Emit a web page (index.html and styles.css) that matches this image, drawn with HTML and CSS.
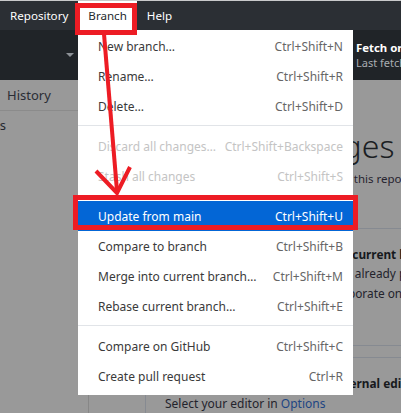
FILE: index.html
```html
<!DOCTYPE html>
<html lang="en">
<head>
<meta charset="utf-8">
<title>GitHub Desktop - Branch menu</title>
<link rel="stylesheet" href="styles.css">
</head>
<body>
<div class="app">
  <header class="titlebar">
    <div class="menu-item">Repository</div>
    <div class="menu-item active">Branch</div>
    <div class="menu-item">Help</div>
  </header>
  <div class="toolbar">
    <div class="tb-branch"><span class="caret"></span></div>
    <div class="tb-push"></div>
    <div class="tb-fetch">
      <div class="fetch-title">Fetch origin</div>
      <div class="fetch-sub">Last fetched just now</div>
    </div>
  </div>
  <div class="body">
    <aside class="sidebar">
      <div class="tabs"><span class="tab">History</span></div>
      <div class="file-count"><span>0 changed files</span></div>
    </aside>
    <main class="content">
      <h1 class="nc-title">No local changes</h1>
      <p class="nc-intro">There are no uncommitted changes in this repository. Here are some friendly suggestions for what to do next.</p>
      <div class="card card-pr">
        <h2 class="card-title">Create a pull request from your current branch</h2>
        <p class="card-text">The current branch (<code class="ref">develop</code>) is already published to GitHub. Create a<br>pull request to propose and collaborate on your changes.</p>
      </div>
      <div class="card card-editor">
        <h2 class="card-title">Open the repository in your external editor</h2>
        <p class="card-text">Select your editor in <a class="link">Options</a></p>
      </div>
    </main>
  </div>

  <div class="dropdown">
    <div class="dd-item"><span>New branch…</span><span class="sc">Ctrl+Shift+N</span></div>
    <div class="dd-item"><span>Rename…</span><span class="sc">Ctrl+Shift+R</span></div>
    <div class="dd-item"><span>Delete…</span><span class="sc">Ctrl+Shift+D</span></div>
    <div class="dd-sep"></div>
    <div class="dd-item disabled"><span>Discard all changes…</span><span class="sc">Ctrl+Shift+Backspace</span></div>
    <div class="dd-item disabled"><span>Stash all changes</span><span class="sc">Ctrl+Shift+S</span></div>
    <div class="dd-sep"></div>
    <div class="dd-item selected"><span>Update from main</span><span class="sc">Ctrl+Shift+U</span></div>
    <div class="dd-item"><span>Compare to branch</span><span class="sc">Ctrl+Shift+B</span></div>
    <div class="dd-item"><span>Merge into current branch…</span><span class="sc">Ctrl+Shift+M</span></div>
    <div class="dd-item"><span>Rebase current branch…</span><span class="sc">Ctrl+Shift+E</span></div>
    <div class="dd-sep"></div>
    <div class="dd-item"><span>Compare on GitHub</span><span class="sc">Ctrl+Shift+C</span></div>
    <div class="dd-item"><span>Create pull request</span><span class="sc">Ctrl+R</span></div>
  </div>

  <div class="annot annot-branch"></div>
  <div class="annot annot-update"></div>
  <svg class="annot-arrow" viewBox="0 0 401 413" width="401" height="413">
    <path d="M104 34 L117 191" />
    <path d="M96 171 L117 193 L130 167" />
  </svg>
</div>
</body>
</html>
```

FILE: styles.css
```css
* {
  box-sizing: border-box;
  margin: 0;
  padding: 0;
}

html, body {
  width: 401px;
  height: 413px;
  overflow: hidden;
}

body {
  font-family: "Noto Sans", "Open Sans", sans-serif;
  background: #999999;
}

.app {
  position: relative;
  display: flex;
  flex-direction: column;
  height: 413px;
}

/* title bar / menu bar */
.titlebar {
  height: 30px;
  flex: none;
  background: #2b2f34;
  border-top: 1px solid #c9cacb;
  display: flex;
}

.menu-item {
  padding: 0 10px;
  color: #ffffff;
  font-size: 11.6px;
  line-height: 29px;
  white-space: nowrap;
}

.menu-item.active {
  background: #ffffff;
  color: #24292e;
}

/* toolbar */
.toolbar {
  height: 50px;
  flex: none;
  background: #202428;
  display: flex;
}

.tb-branch {
  width: 78px;
  display: flex;
  align-items: center;
  justify-content: flex-end;
  padding-right: 4px;
}

.caret {
  width: 0;
  height: 0;
  border-left: 4px solid transparent;
  border-right: 4px solid transparent;
  border-top: 4px solid #8d9297;
}

.tb-push {
  flex: 1;
}

.tb-fetch {
  width: 48px;
  padding: 10px 0 0 3px;
  white-space: nowrap;
  overflow: hidden;
}

.fetch-title {
  color: #ffffff;
  font-weight: 700;
  font-size: 11.4px;
  line-height: 16px;
}

.fetch-sub {
  color: #a9adb2;
  font-size: 11px;
  line-height: 14px;
}

/* body */
.body {
  flex: 1;
  display: flex;
  min-height: 0;
}

.sidebar {
  width: 89px;
  flex: none;
  border-right: 1px solid #878787;
}

.tabs {
  height: 31px;
  border-bottom: 1px solid #8b8b8b;
  display: flex;
  align-items: center;
  padding-left: 7px;
}

.tab {
  font-size: 13px;
  color: #2a2d35;
}

.file-count {
  width: 6px;
  height: 28px;
  display: flex;
  justify-content: flex-end;
  align-items: center;
  white-space: nowrap;
  font-size: 13px;
  color: #25282f;
}

.content {
  flex: none;
  width: 560px;
  padding-left: 56px;
  color: #1c1f25;
}

.nc-title {
  font-size: 32px;
  font-weight: 300;
  line-height: 36px;
  margin-top: 48px;
  padding-left: 2px;
  white-space: nowrap;
  color: #1b1e23;
}

.nc-intro {
  font-size: 11.5px;
  line-height: 18px;
  margin-top: 6px;
  width: 440px;
  color: #26232f;
}

.card {
  margin-top: 22px;
  width: 470px;
  border: 1px solid #868a91;
  border-radius: 3px;
  padding: 16px 19px 0;
}

.card-pr {
  height: 118px;
}

.card-editor {
  margin-top: 11px;
  height: 80px;
}

.card-title {
  font-size: 11.8px;
  font-weight: 700;
  line-height: 19px;
  white-space: nowrap;
  color: #17191d;
}

.card-text {
  font-size: 12px;
  line-height: 19px;
  width: 410px;
  color: #23232c;
}

.card-pr .card-text {
  font-size: 11.85px;
  width: 440px;
}

.card-editor .card-text {
  margin-top: 1px;
}

.ref {
  font-family: "Liberation Mono", "DejaVu Sans Mono", monospace;
  font-size: 11.5px;
  padding: 1px 5px;
  border-radius: 3px;
  background: #8f9296;
}

.link {
  color: #1d4583;
}

/* dropdown menu */
.dropdown {
  position: absolute;
  left: 78px;
  top: 30px;
  width: 275px;
  height: 365px;
  background: #ffffff;
  padding-top: 1px;
  font-size: 12px;
  color: #3a3a3a;
}

.dd-item {
  height: 30px;
  display: flex;
  align-items: center;
  justify-content: space-between;
  padding: 0 10px 0 20px;
  white-space: nowrap;
}

.dd-item .sc {
  color: #666666;
}

.dd-item.disabled,
.dd-item.disabled .sc {
  color: #c4c4c4;
}

.dd-item.selected {
  background: #0366d6;
  color: #ffffff;
}

.dd-item.selected .sc {
  color: #ffffff;
}

.dd-sep {
  height: 1px;
  background: #e1e4e8;
  margin: 4px 0 5px;
}

/* annotations drawn over the screenshot */
.annot {
  position: absolute;
  border: 5px solid #ed1c24;
}

.annot-branch {
  left: 75px;
  top: 3px;
  width: 62px;
  height: 32px;
}

.annot-update {
  left: 73px;
  top: 195px;
  width: 285px;
  height: 35px;
}

.annot-arrow {
  position: absolute;
  left: 0;
  top: 0;
  fill: none;
  stroke: #ed1c24;
  stroke-width: 4;
  pointer-events: none;
}
```
